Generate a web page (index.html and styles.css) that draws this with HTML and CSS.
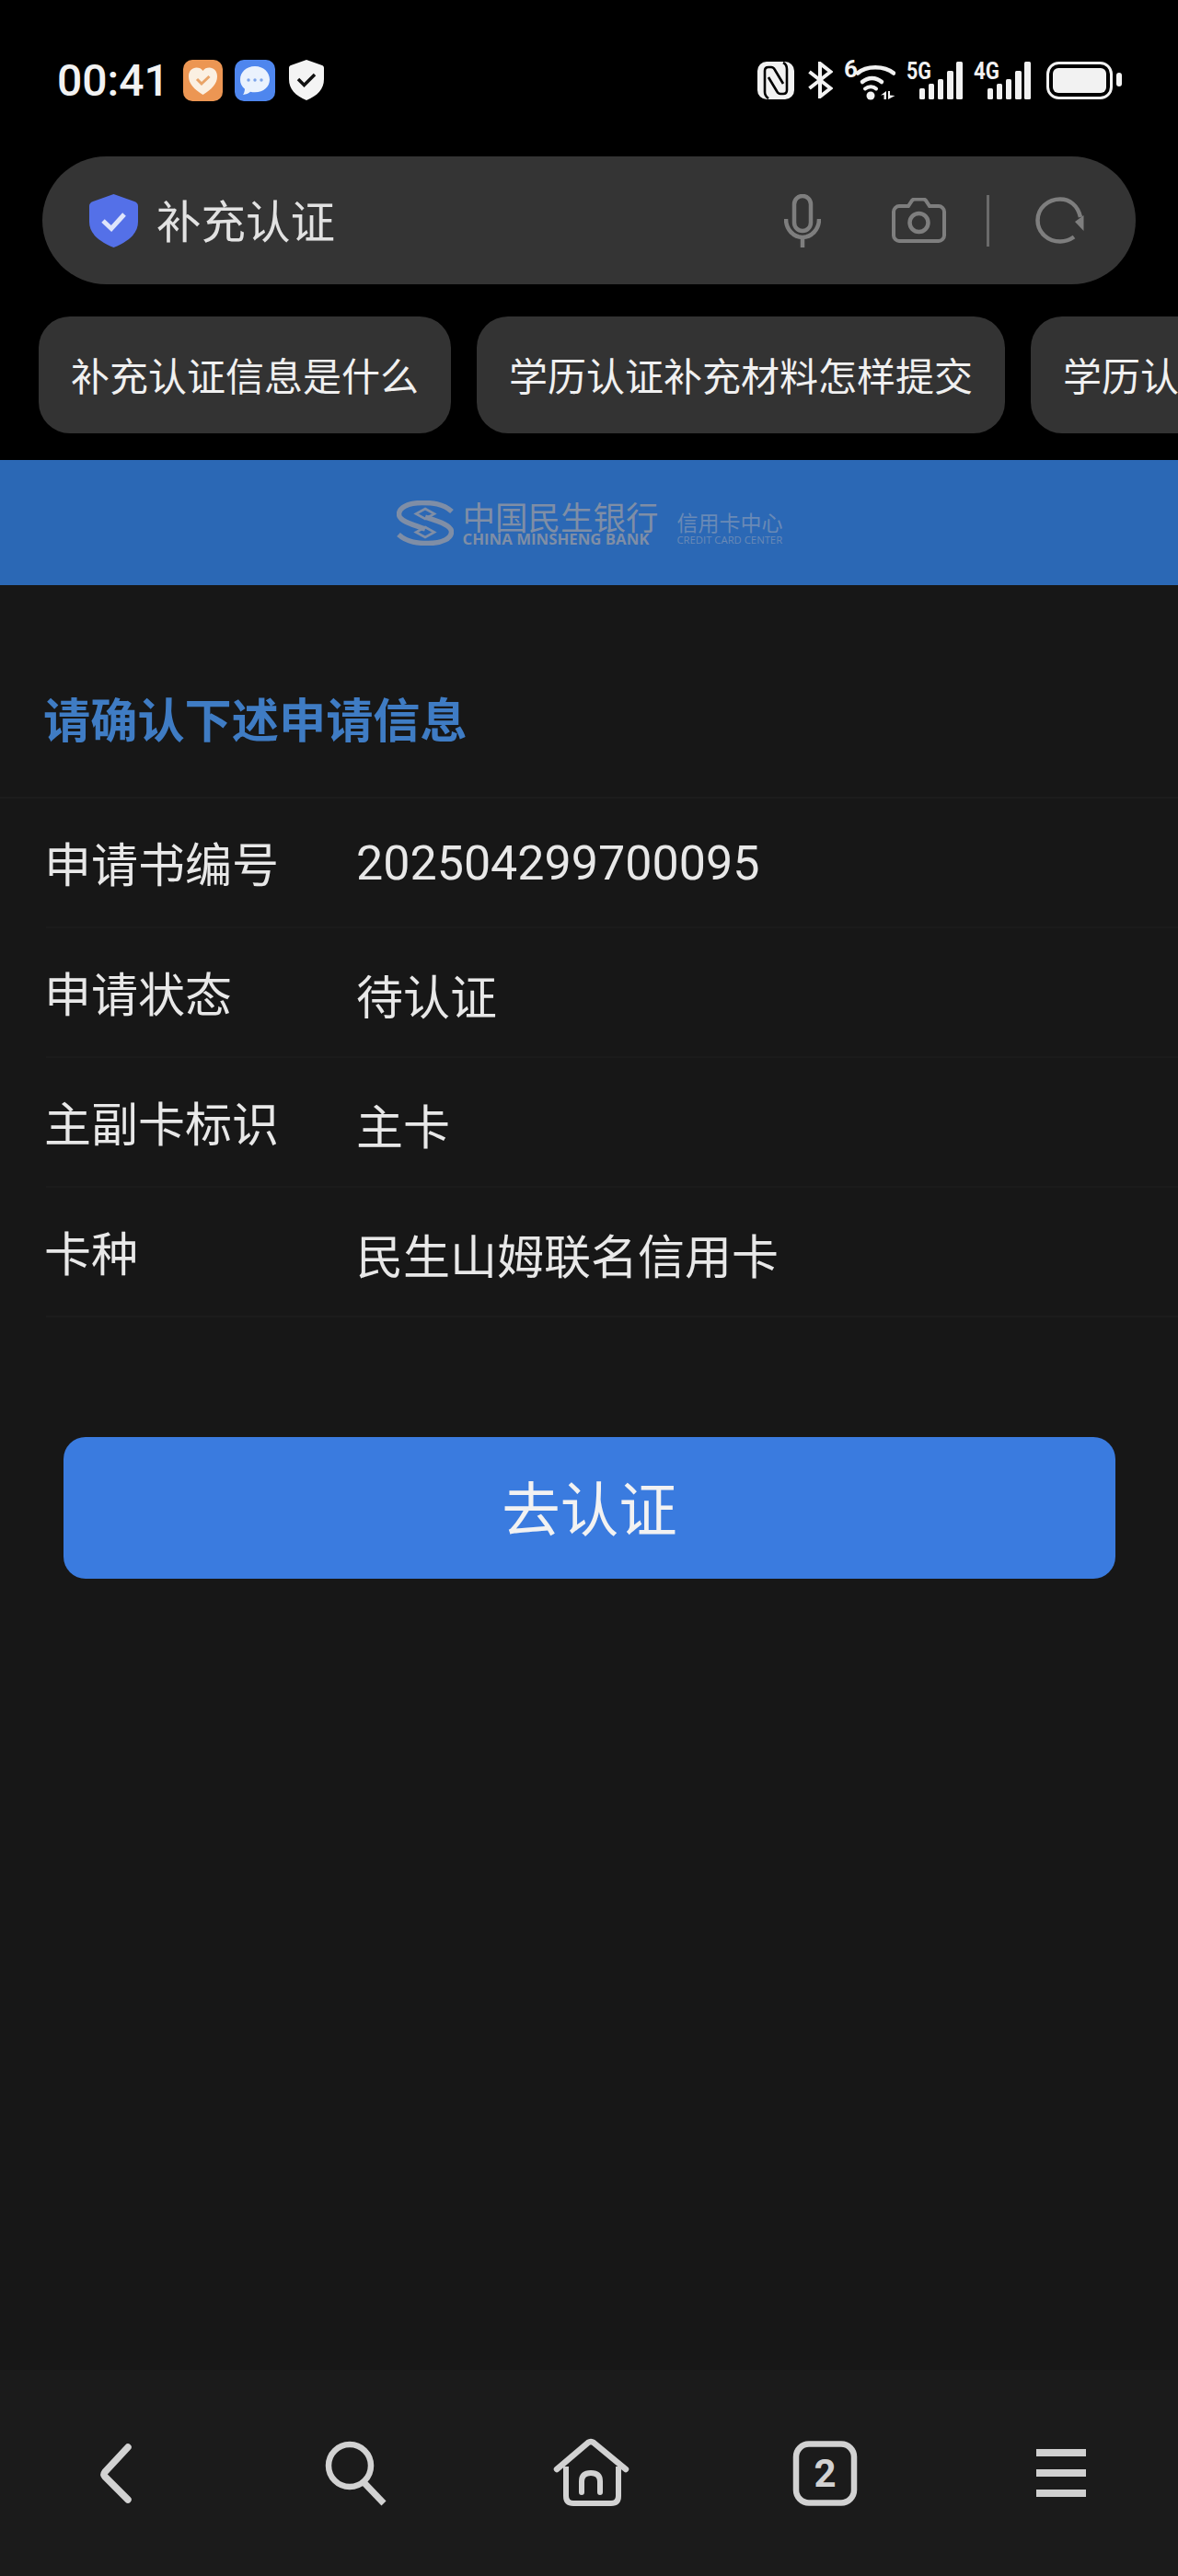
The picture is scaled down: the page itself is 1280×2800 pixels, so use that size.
FILE: index.html
```html
<!DOCTYPE html>
<html lang="zh-CN">
<head>
<meta charset="utf-8">
<title>补充认证</title>
<link rel="stylesheet" href="styles.css">
</head>
<body>
<div class="phone">
  <header class="top">
    <div class="status">
      <span class="time">00:41</span>
      <svg class="ic app-a" width="43" height="45" viewBox="0 0 43 45"><rect width="43" height="45" rx="10" fill="#ec9653"/><path d="M21.5 38C12 32 6 26 6 18c0-6 4-9.500 8.500-9.500 3 0 5.500 1 7 3.500 1.500-2.500 4-3.500 7-3.500C33 8.500 37 12 37 18c0 8-6 14-15.500 20z" fill="#fbf0e2"/><path d="M15 21l5 5 8.500-8" fill="none" stroke="#e9a468" stroke-width="3"/></svg>
      <svg class="ic app-b" width="44" height="45" viewBox="0 0 44 45"><rect width="44" height="45" rx="10" fill="#4e86ee"/><path d="M22 7c-9.500 0-16 6.500-16 14.500 0 4 1.500 7.500 5 10.200-.2 2.500-.8 4.500-2 6.300 3.500-.4 6-1.600 8-3.300 1.600.4 3.200.6 5 .6 9.500 0 16-6 16-13.800S31.500 7 22 7z" fill="#eaf2fd"/><circle cx="15" cy="22" r="1.700" fill="#7ba4ea"/><circle cx="22" cy="22" r="1.700" fill="#7ba4ea"/><circle cx="29" cy="22" r="1.700" fill="#7ba4ea"/></svg>
      <svg class="ic app-c" width="38" height="44" viewBox="0 0 38 44"><path d="M19 0l17 6c1.500.5 2 1.500 2 3v12c0 11-7 18-19 23C7 39 0 32 0 21V9c0-1.500.5-2.500 2-3z" fill="#f4f4f4"/><path d="M10 21l6.500 6.500L28 16" fill="none" stroke="#111" stroke-width="3.500"/></svg>
      <div class="sys">
        <svg class="ic" width="40" height="41" viewBox="0 0 40 41"><rect width="40" height="41" rx="10" fill="#f2f2f2"/><path d="M12 40C9 38 8 36 8 33V10c0-3 2-4 4-4h3c2 0 3 1 4 3l9 15M28 1c3 1.500 4 4 4 7v23c0 3-2 4-4 4h-3c-2 0-3-1-4-3l-9-15" fill="none" stroke="#000" stroke-width="2.600"/></svg>
        <svg class="ic m15" width="27" height="40" viewBox="0 0 27 40"><path d="M1.500 11l23 18L13 38V2l11.500 9-23 18" fill="none" stroke="#f2f2f2" stroke-width="4" stroke-linejoin="miter"/></svg>
        <svg class="ic m12 tall" width="56" height="50" viewBox="0 -6 56 50"><text x="0" y="19" class="six">6</text><path d="M15 14.500C24 6 44 6 54 14.500" fill="none" stroke="#f2f2f2" stroke-width="4.500" stroke-linecap="round"/><path d="M20 24c6-5.500 15-5.500 21 0" fill="none" stroke="#f2f2f2" stroke-width="4.500" stroke-linecap="round"/><path d="M23 31.500c3.500-3 9-3 12 0" fill="none" stroke="#f2f2f2" stroke-width="4" stroke-linecap="round"/><circle cx="29" cy="39" r="4.500" fill="#f2f2f2"/><path d="M46 34v9h-2.500v-5L40 38.500z M48 34h2v4.500l5.500 0.500L48 43z" fill="#f2f2f2"/></svg>
        <svg class="ic m12 tall" width="61" height="47" viewBox="0 -6 61 47"><text x="0" y="19" class="net" textLength="27" lengthAdjust="spacingAndGlyphs">5G</text><rect class="bar" x="14" y="29" width="6" height="12" rx="1.500"/><rect class="bar" x="24" y="24" width="6" height="17" rx="1.500"/><rect class="bar" x="34" y="19" width="6" height="22" rx="1.500"/><rect class="bar" x="44" y="10" width="7" height="31" rx="1.500"/><rect class="bar" x="54" y="0" width="7" height="41" rx="1.500"/></svg>
        <svg class="ic m12 tall" width="62" height="47" viewBox="0 -6 62 47"><text x="0" y="19" class="net" textLength="28" lengthAdjust="spacingAndGlyphs">4G</text><rect class="bar" x="15" y="29" width="6" height="12" rx="1.500"/><rect class="bar" x="25" y="24" width="6" height="17" rx="1.500"/><rect class="bar" x="35" y="19" width="6" height="22" rx="1.500"/><rect class="bar" x="45" y="10" width="7" height="31" rx="1.500"/><rect class="bar" x="55" y="0" width="7" height="41" rx="1.500"/></svg>
        <svg class="ic m17" width="82" height="41" viewBox="0 0 82 41"><rect x="1.500" y="1.500" width="69" height="38" rx="12" fill="none" stroke="#f2f2f2" stroke-width="3"/><rect x="7" y="7" width="58" height="27" rx="6" fill="#f2f2f2"/><rect x="76" y="12" width="6" height="15" rx="3" fill="#f2f2f2"/></svg>
      </div>
    </div>
    <div class="search">
      <svg class="ic" width="53" height="58" viewBox="0 0 53 58"><path d="M26.500 0L49 8c2.500 1 4 2.500 4 5v17c0 12-9 21-26.500 28C9 51 0 42 0 30V13c0-2.500 1.500-4 4-5z" fill="#5470e8"/><path d="M15 29l9 8.500L38 22" fill="none" stroke="#dfe5fb" stroke-width="5"/></svg>
      <span class="query">补充认证</span>
      <svg class="ic mic" width="40" height="58" viewBox="0 0 40 58"><rect x="11" y="2" width="18" height="38" rx="9" fill="none" stroke="#7e7e7e" stroke-width="4.500"/><path d="M2 27c0 11 8 20 18 20s18-9 18-20M20 47v11" fill="none" stroke="#7e7e7e" stroke-width="4.500"/></svg>
      <svg class="ic cam" width="59" height="49" viewBox="0 0 59 49"><path d="M8 9h10l4-6c.7-1 1.500-1.500 3-1.500h9c1.500 0 2.300.5 3 1.500l4 6h10c3 0 6 3 6 6v26c0 3-3 6-6 6H8c-3 0-6-3-6-6V15c0-3 3-6 6-6z" fill="none" stroke="#7e7e7e" stroke-width="4"/><circle cx="29.500" cy="27" r="10" fill="none" stroke="#7e7e7e" stroke-width="4.500"/></svg>
      <span class="rule"></span>
      <svg class="ic ref" width="53" height="51" viewBox="0 0 53 51"><path d="M49 22C46 9 37 2.500 27 2.500 14 2.500 2.500 12 2.500 25.500S14 48.500 27 48.500c5.500 0 10-1.500 15-5" fill="none" stroke="#7e7e7e" stroke-width="4.500"/><path d="M52.500 20V37L43 27z" fill="#7e7e7e"/></svg>
    </div>
    <div class="chips">
      <span class="chip">补充认证信息是什么</span>
      <span class="chip">学历认证补充材料怎样提交</span>
      <span class="chip">学历认证补充材料</span>
    </div>
  </header>

  <div class="banner">
    <svg class="ic" width="62" height="49" viewBox="0 0 62 49"><path d="M60 12C50 3 38 2.500 28 2.500 12 2.500 2.500 8 2.500 15 2.500 22 16 26 31 31" fill="none" stroke="#7f8ea6" stroke-width="5.500"/><path d="M2 37C12 46 24 46.500 34 46.500 50 46.500 59.500 41 59.500 34 59.500 27 46 23 31 18" fill="none" stroke="#7f8ea6" stroke-width="5.500"/><path d="M31 9l10 5.500-10 5.500-10-5.500z M31 29l10 5.500-10 5.500-10-5.500z" fill="none" stroke="#7f8ea6" stroke-width="2.600"/></svg>
    <div class="bank">
      <span class="bank-zh">中国民生银行</span>
      <span class="bank-en">CHINA MINSHENG BANK</span>
    </div>
    <div class="center">
      <span class="center-zh">信用卡中心</span>
      <span class="center-en">CREDIT CARD CENTER</span>
    </div>
  </div>

  <main class="content">
    <h1 class="title">请确认下述申请信息</h1>
    <div class="row"><span class="label">申请书编号</span><span class="value digits">202504299700095</span></div>
    <div class="row"><span class="label">申请状态</span><span class="value">待认证</span></div>
    <div class="row"><span class="label">主副卡标识</span><span class="value">主卡</span></div>
    <div class="row"><span class="label">卡种</span><span class="value">民生山姆联名信用卡</span></div>
    <button class="go" type="button">去认证</button>
  </main>

  <nav class="nav">
    <svg class="ic" width="80" height="80" viewBox="0 0 80 80"><path d="M51 12L26 39q-2 2.500 0 5L51 69" fill="none" stroke="#d2d2d2" stroke-width="7.500" stroke-linecap="round"/></svg>
    <svg class="ic" width="80" height="80" viewBox="0 0 80 80"><circle cx="36" cy="32" r="23" fill="none" stroke="#d2d2d2" stroke-width="6.500"/><path d="M52 51l21 22" fill="none" stroke="#d2d2d2" stroke-width="7"/></svg>
    <svg class="ic" width="90" height="90" viewBox="0 0 90 90"><path d="M10 41L44 12q3-2 6 0l35 29" fill="none" stroke="#d2d2d2" stroke-width="6.500" stroke-linecap="round"/><path d="M20 38v32q0 8 8 8h41q8 0 8-8V38" fill="none" stroke="#d2d2d2" stroke-width="6"/><path d="M37 66V54q0-9 10-9t10 9v12" fill="none" stroke="#d2d2d2" stroke-width="6" stroke-linecap="round"/></svg>
    <svg class="ic" width="80" height="80" viewBox="0 0 80 80"><rect x="9" y="8.500" width="63" height="64" rx="14" fill="none" stroke="#d2d2d2" stroke-width="6.500"/><text x="40.500" y="55" class="tabs">2</text></svg>
    <svg class="ic" width="80" height="80" viewBox="0 0 80 80"><rect x="14" y="14" width="54" height="8" fill="#d0d0d0"/><rect x="14" y="36" width="54" height="8" fill="#d0d0d0"/><rect x="14" y="58" width="54" height="8" fill="#d0d0d0"/></svg>
  </nav>
</div>
</body>
</html>
```

FILE: styles.css
```css
* { box-sizing: border-box; }
html, body { margin: 0; padding: 0; background: #000; }
body { font-family: "Noto Sans CJK SC", "Noto Sans", sans-serif; }
.phone { width: 1280px; height: 2800px; display: flex; flex-direction: column; overflow: hidden; }
.ic { display: block; flex: none; }

.top { height: 500px; flex: none; background: #000; }
.status { height: 170px; padding: 4px 61px 0 62px; display: flex; align-items: center; }
.time { font-family: Roboto, sans-serif; font-size: 48px; font-weight: 500; color: #f2f2f2; }
.app-a { margin-left: 15px; }
.app-b { margin-left: 13px; }
.app-c { margin-left: 15px; }
.sys { margin-left: auto; display: flex; align-items: center; }
.m15 { margin-left: 15px; }
.m12 { margin-left: 12px; }
.m17 { margin-left: 17px; }
.tall { margin-top: -6px; }
.bar { fill: #f2f2f2; }
.six { font: 700 26px Roboto, sans-serif; fill: #f2f2f2; }
.net { font: 700 26px Roboto, sans-serif; fill: #f2f2f2; }

.search { height: 139px; margin: 0 46px; padding: 0 56px 0 51px; background: #343434; border-radius: 70px; display: flex; align-items: center; }
.query { margin-left: 20px; padding-bottom: 3px; font-size: 48.500px; color: #e2e2e2; }
.mic { margin-left: auto; }
.cam { margin-left: 77px; }
.rule { width: 3px; height: 56px; margin-left: 44px; background: #6a6a6a; }
.ref { margin-left: 50px; }

.chips { margin: 35px 0 0 42px; display: flex; gap: 28px; overflow: hidden; }
.chip { flex: none; height: 127px; padding: 0 35px 3px; display: flex; align-items: center; background: #333; border-radius: 34px; font-size: 42px; color: #f0f0f0; }

.banner { height: 136px; flex: none; background: #2b68b5; display: flex; align-items: center; justify-content: center; }
.bank { margin-left: 10px; display: flex; flex-direction: column; width: 214px; }
.bank-zh { font-size: 35.500px; line-height: 35px; color: #7f8ea6; white-space: nowrap; }
.bank-en { font: 700 16.800px/16px "Open Sans", sans-serif; color: #7f8ea6; white-space: nowrap; }
.center { margin-left: 19px; display: flex; flex-direction: column; padding-top: 11px; width: 114px; }
.center-zh { font-size: 23px; line-height: 27px; color: #6a8ab6; white-space: nowrap; }
.center-en { font: 400 11.300px/12px "Open Sans", sans-serif; color: #6a8ab6; white-space: nowrap; }

.content { flex: 1; background: #171717; }
.title { margin: 0; height: 232px; padding: 57px 0 0 47px; display: flex; align-items: center; font-size: 51.200px; font-weight: 700; color: #3f7cc4; border-bottom: 2px solid #1c1c1c; }
.row { height: 141px; margin-left: 50px; display: flex; align-items: center; border-bottom: 2px solid #1b1b1b; }
.label { width: 337px; margin-left: -2px; padding-bottom: 2px; font-size: 51px; line-height: 60px; color: #e8e8e8; flex: none; }
.value { margin-left: 2px; padding-top: 4px; font-size: 51px; line-height: 60px; color: #e8e8e8; }
.digits { padding-top: 2px; font-family: Roboto, sans-serif; font-size: 52px; }
.go { display: block; width: 1143px; height: 154px; margin: 130px 0 0 69px; padding: 0 0 7px; border: 0; border-radius: 24px; background: #3a7bdf; color: #f2f2f2; font: 400 63.500px "Noto Sans CJK SC", sans-serif; }

.nav { height: 224px; flex: none; background: #1b1b1b; display: grid; grid-template-columns: repeat(5, 256px); align-items: center; justify-items: center; }
.tabs { font: 700 42px Roboto, sans-serif; fill: #d2d2d2; text-anchor: middle; }
```
